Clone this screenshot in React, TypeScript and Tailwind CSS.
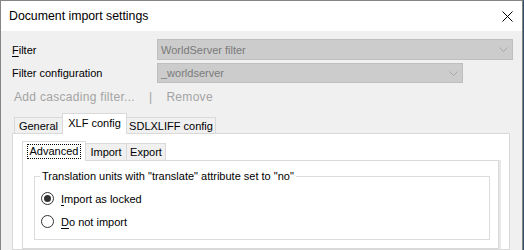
import React from 'react';

const Chevron = () => (
  <svg width="9" height="5" viewBox="0 0 9 5" className="shrink-0">
    <path d="M0.5 0.5 L4.5 4.5 L8.5 0.5" fill="none" stroke="#a6a6a6" strokeWidth="1" />
  </svg>
);

const CloseIcon = () => (
  <svg width="11" height="11" viewBox="0 0 11 11">
    <path d="M0.5 0.5 L10.5 10.5 M10.5 0.5 L0.5 10.5" stroke="#000" strokeWidth="1" />
  </svg>
);

interface SelectProps {
  value: string;
  width: string;
  height: string;
}

const DisabledSelect: React.FC<SelectProps> = ({ value, width, height }) => (
  <div
    className={`${width} ${height} flex items-center justify-between border border-[#bfbfbf] bg-[#cccccc] pl-[3px] pr-[4px] text-[#7a7a7a]`}
  >
    <span>{value}</span>
    <Chevron />
  </div>
);

const Radio: React.FC<{ checked?: boolean; children: React.ReactNode }> = ({ checked, children }) => (
  <div className="flex h-[23px] items-center gap-[7px]">
    <div className="flex h-[13px] w-[13px] items-center justify-center rounded-full border border-[#333333] bg-white">
      {checked && <div className="h-[7px] w-[7px] rounded-full bg-[#333333]" />}
    </div>
    <span>{children}</span>
  </div>
);

export default function App() {
  return (
    <div className="h-[250px] w-[524px] overflow-hidden bg-[#2f4c6c] font-['Liberation_Sans',Arial,sans-serif] text-[11px] leading-[14px] text-black">
      <div className="flex h-[250px] w-[523px] flex-col border-l border-r border-t border-[#858585] bg-[#f0f0f0]">
        {/* title bar */}
        <div className="flex h-[30px] shrink-0 items-center justify-between bg-white pl-[8px] pr-[9px]">
          <span className="text-[12.3px]">Document import settings</span>
          <CloseIcon />
        </div>

        <div className="flex flex-1 flex-col pl-[11px] pt-[8px]">
          <div className="flex h-[21px] items-center">
            <span className="w-[145px]">
              <span className="underline underline-offset-2">F</span>ilter
            </span>
            <DisabledSelect value="WorldServer filter" width="w-[356px]" height="h-[21px]" />
          </div>
          <div className="mt-[3px] flex h-[20px] items-center">
            <span className="w-[145px]">Filter configuration</span>
            <DisabledSelect value="_worldserver" width="w-[306px]" height="h-[20px]" />
          </div>

          <div className="mt-[5px] flex h-[18px] items-center gap-[14px] pl-[2px] text-[12px] tracking-[0.3px] text-[#a3a3a3]">
            <span>Add cascading filter...</span>
            <span>|</span>
            <span>Remove</span>
          </div>

          {/* outer tabs */}
          <div className="mt-[7px] flex h-[20px] items-end whitespace-nowrap pl-[2px]">
            <div className="flex h-[16px] w-[48px] items-center justify-center border-l border-t border-[#d9d9d9] bg-[#f0f0f0]">
              General
            </div>
            <div className="relative z-10 -mb-px flex h-[21px] w-[65px] items-center justify-center border-l border-r border-t border-[#d9d9d9] bg-white pb-[2px]">
              XLF config
            </div>
            <div className="flex h-[16px] w-[89px] items-center justify-center border-r border-t border-[#d9d9d9] bg-[#f0f0f0]">
              SDLXLIFF config
            </div>
          </div>

          <div className="flex w-[498px] flex-1 flex-col border border-[#d9d9d9] bg-white pl-[9px] pt-[7px]">
            {/* inner tabs */}
            <div className="flex h-[19px] items-end whitespace-nowrap">
              <div className="relative z-10 -mb-px flex h-[20px] w-[64px] items-center justify-center border-l border-r border-t border-[#d9d9d9] bg-white">
                <span className="border border-dotted border-black px-[2px] leading-[13px]">Advanced</span>
              </div>
              <div className="flex h-[17px] w-[41px] items-center justify-center border-r border-t border-[#d9d9d9] bg-[#f0f0f0]">
                Import
              </div>
              <div className="flex h-[17px] w-[39px] items-center justify-center border-r border-t border-[#d9d9d9] bg-[#f0f0f0]">
                Export
              </div>
            </div>

            <div className="flex flex-1">
              <div className="w-[477px] border border-[#d9d9d9] bg-white pl-[11px] pt-[8px]">
                <fieldset className="w-[456px] border border-[#dcdcdc] pb-[6px]">
                  <legend className="ml-[5px] px-[2px]">
                    Translation units with &quot;translate&quot; attribute set to &quot;no&quot;
                  </legend>
                  <div className="mt-[4px] flex flex-col pl-[6px]">
                    <Radio checked>
                      <span className="underline underline-offset-2">I</span>mport as locked
                    </Radio>
                    <Radio>
                      <span className="underline underline-offset-2">D</span>o not import
                    </Radio>
                  </div>
                </fieldset>
              </div>
              <div className="w-[2px] bg-[#e8e8e8]" />
            </div>
          </div>
        </div>
      </div>
    </div>
  );
}
